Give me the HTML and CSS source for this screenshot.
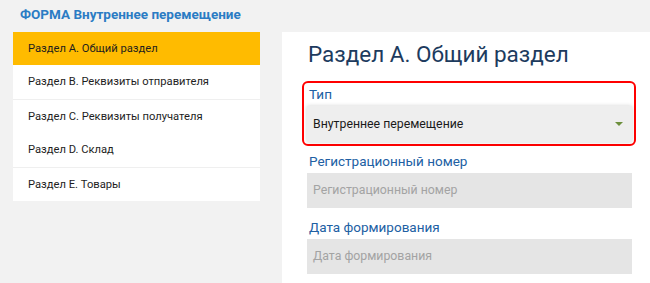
FILE: index.html
```html
<!DOCTYPE html>
<html lang="ru">
<head>
<meta charset="utf-8">
<link rel="stylesheet" href="styles.css">
</head>
<body>
<header class="page-title">ФОРМА Внутреннее перемещение</header>
<div class="layout">
  <nav class="sidebar">
    <a class="nav-item active">Раздел А. Общий раздел</a>
    <a class="nav-item divided">Раздел B. Реквизиты отправителя</a>
    <a class="nav-item">Раздел C. Реквизиты получателя</a>
    <a class="nav-item divided">Раздел D. Склад</a>
    <a class="nav-item">Раздел E. Товары</a>
  </nav>
  <main class="panel">
    <h1 class="section-title">Раздел А. Общий раздел</h1>
    <div class="field highlighted">
      <label class="field-label">Тип</label>
      <div class="select">
        <span>Внутреннее перемещение</span>
        <span class="caret"></span>
      </div>
    </div>
    <div class="field">
      <label class="field-label">Регистрационный номер</label>
      <div class="input placeholder">Регистрационный номер</div>
    </div>
    <div class="field">
      <label class="field-label">Дата формирования</label>
      <div class="input placeholder">Дата формирования</div>
    </div>
  </main>
</div>
</body>
</html>
```
FILE: styles.css
```css
html, body {
  margin: 0;
  padding: 0;
  background: #f2f2f2;
  font-family: Roboto, "Liberation Sans", sans-serif;
  height: 100%;
  overflow: hidden;
}
.page-title {
  padding: 6px 20px 0;
  height: 26px;
  font-size: 13.5px;
  font-weight: bold;
  color: #2b7cc4;
}
.layout {
  display: flex;
  gap: 22px;
  padding-left: 13px;
  height: calc(100% - 32px);
}
.sidebar {
  width: 247px;
  align-self: flex-start;
  background: #fff;
  display: flex;
  flex-direction: column;
}
.nav-item {
  display: block;
  height: 33px;
  line-height: 33px;
  padding-left: 15px;
  font-size: 11.2px;
  color: #1e1e1e;
}
.nav-item.divided {
  height: 34px;
  border-bottom: 1px solid #efefef;
}
.nav-item.active {
  background: #ffbb00;
}
.panel {
  flex: 1;
  background: #fff;
  padding: 8px 18px 0 25px;
}
.section-title {
  margin: 0 0 13px 1px;
  font-size: 22.5px;
  font-weight: normal;
  line-height: 28px;
  color: #1d3b5e;
}
.field {
  margin-bottom: 10px;
}
.field.highlighted {
  border: 2px solid #ff0000;
  border-radius: 6px;
  padding: 2px 2px 2px 3px;
  margin: 0 -4px 6px -5px;
}
.field-label {
  display: block;
  font-size: 13.5px;
  line-height: 18px;
  color: #2160a3;
  margin-left: 2px;
  margin-bottom: 3px;
}
.select {
  height: 36px;
  background: #eeeeee;
  box-shadow: 0 0 4px rgba(0,0,0,0.18);
  display: flex;
  align-items: center;
  justify-content: space-between;
  padding: 0 9px 0 6px;
  font-size: 12.3px;
  color: #1a1a1a;
}
.caret {
  width: 0;
  height: 0;
  border-left: 4px solid transparent;
  border-right: 4px solid transparent;
  border-top: 4px solid #6c8f3c;
}
.input {
  height: 35px;
  line-height: 35px;
  background: #e5e5e5;
  padding-left: 6px;
  font-size: 12.3px;
}
.placeholder {
  color: #a3a3a3;
}
```
